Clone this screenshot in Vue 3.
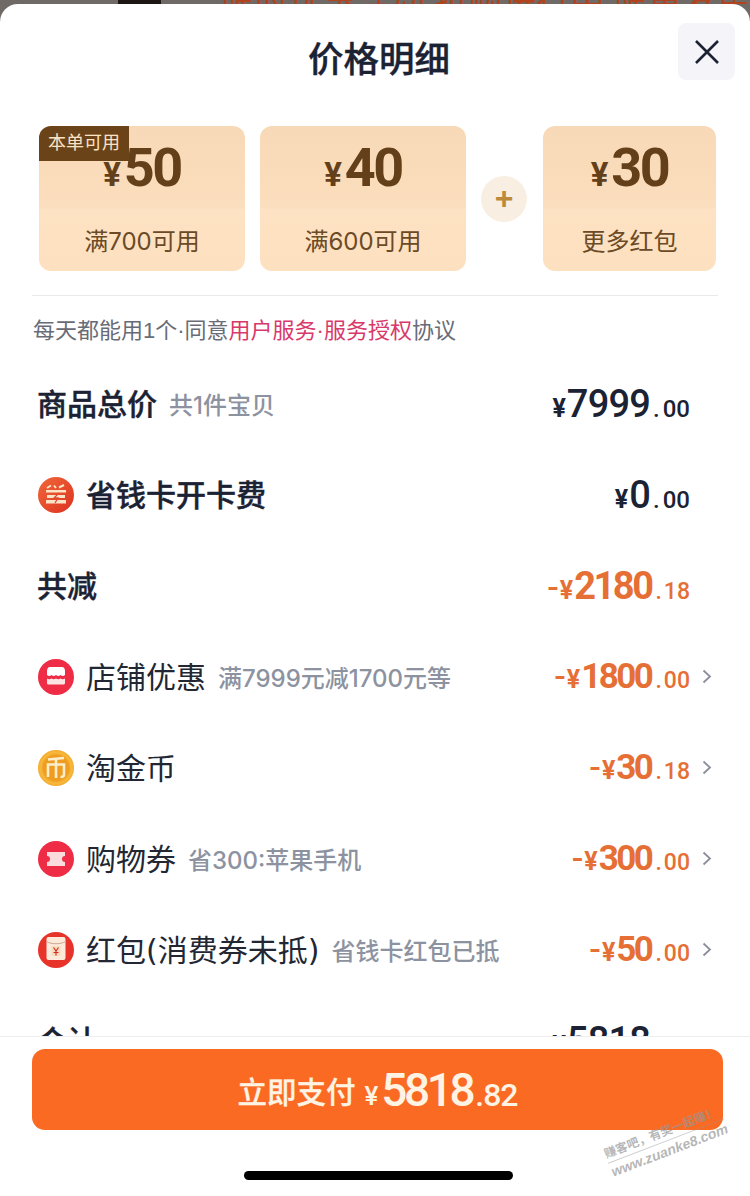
<template>
  <div class="page">
    <div class="backdrop">
      <span class="dark-block"></span>
      <span class="red-text">限时优惠活动 抢购进行中 限量发售</span>
    </div>
    <div class="sheet">
      <header class="head">
        <h1>价格明细</h1>
        <button class="close">
          <svg width="26" height="26" viewBox="0 0 26 26"><path d="M2 2 24 24M24 2 2 24" stroke="#1b2233" stroke-width="2.6" fill="none" /></svg>
        </button>
      </header>

      <div class="coupons">
        <div class="coupon wide">
          <span class="tag">本单可用</span>
          <div class="face"><small>¥</small>50</div>
          <div class="cond">满700可用</div>
        </div>
        <div class="coupon wide">
          <div class="face"><small>¥</small>40</div>
          <div class="cond">满600可用</div>
        </div>
        <div class="plus">+</div>
        <div class="coupon narrow">
          <div class="face"><small>¥</small>30</div>
          <div class="cond">更多红包</div>
        </div>
      </div>

      <p class="note">每天都能用1个·同意<em>用户服务·服务授权</em>协议</p>

      <div class="list">
        <div v-for="row in rows" :key="row.label" class="row" :class="{ arrowed: row.arrow }">
          <svg v-if="row.icon === 'card'" class="icon" viewBox="0 0 36 36">
            <defs><linearGradient id="cardg" x1="0" y1="0" x2="1" y2="1"><stop offset="0" stop-color="#f0683a" /><stop offset="1" stop-color="#dd3220" /></linearGradient></defs>
            <circle cx="18" cy="18" r="18" fill="url(#cardg)" />
            <path d="M9 11l4-2.500M16 8.500l2 2.500M21 10.500l5-2.500" stroke="#fbe3c8" stroke-width="2" fill="none" />
            <path d="M8 13h20v2.600H8zM9 18h18v3H9zM8 23h20v3.500H8z" fill="#fbe3c8" />
            <path d="M21 16l-5 5 4 0-3 5" stroke="#e5482c" stroke-width="1.300" fill="none" />
          </svg>
          <svg v-else-if="row.icon === 'shop'" class="icon" viewBox="0 0 36 36">
            <circle cx="18" cy="18" r="18" fill="#ee2c45" />
            <path d="M12 8h12c2 0 3 2 3 4v4c-1.500 1.200-3 1.200-4.500 0-1.500 1.200-3 1.200-4.500 0-1.500 1.200-3 1.200-4.500 0-1.500 1.200-3 1.200-4.500 0v-4c0-2 1-4 3-4z" fill="#fff" />
            <path d="M9 19.500c1.500 1 3 1 4.500 0 1.500 1 3 1 4.500 0 1.500 1 3 1 4.500 0 1.500 1 3 1 4.500 0V24c0 1-.8 1.500-2 1.500H11c-1.200 0-2-.5-2-1.500z" fill="#fde4e4" />
          </svg>
          <svg v-else-if="row.icon === 'coin'" class="icon" viewBox="0 0 36 36">
            <defs><radialGradient id="coing"><stop offset="0.7" stop-color="#ee9d20" /><stop offset="0.85" stop-color="#f8b93c" /><stop offset="1" stop-color="#f4ab2e" /></radialGradient></defs>
            <circle cx="18" cy="18" r="18" fill="url(#coing)" />
            <path d="M10 9.500l16-1.500M18 8.500v19.500M10 27V14.500h16v10c0 2-1 2.500-3.500 2.500" stroke="#fdeecb" stroke-width="2.600" fill="none" />
          </svg>
          <svg v-else-if="row.icon === 'ticket'" class="icon" viewBox="0 0 36 36">
            <circle cx="18" cy="18" r="18" fill="#ee2c45" />
            <path d="M9 11h18v4a3 3 0 0 0 0 6v4H9v-4a3 3 0 0 0 0-6z" fill="#fbdcdc" />
          </svg>
          <svg v-else-if="row.icon === 'packet'" class="icon" viewBox="0 0 36 36">
            <circle cx="18" cy="18" r="18" fill="#e8332a" />
            <rect x="8.500" y="5" width="19" height="23" rx="2" fill="#fdeadb" />
            <path d="M8.500 9.500c5 3 14 3 19 0" stroke="#c9a58c" stroke-width="1" fill="none" />
            <rect x="13.500" y="14" width="9" height="10" fill="#f8dcc0" />
            <path d="M15.500 15.500l2.500 3.500 2.500-3.500M18 19v4.500M15.500 20.500h5" stroke="#d62a1f" stroke-width="1.200" fill="none" />
          </svg>
          <span class="label" :class="row.kind">{{ row.label }}</span>
          <span v-if="row.sub" class="sub">{{ row.sub }}</span>
          <span class="price" :class="{ minus: row.minus, big: row.big }">
            <em v-if="row.minus">-</em><small>¥</small><b>{{ row.whole }}</b><i><u>.</u>{{ row.cents }}</i>
          </span>
          <svg v-if="row.arrow" class="chev" width="10" height="15" viewBox="0 0 10 15"><path d="M1.500 1.500 8 7.500l-6.500 6" stroke="#8a8f9b" stroke-width="1.800" fill="none" /></svg>
        </div>
      </div>

      <footer class="foot">
        <button class="pay"><span class="pay-label">立即支付</span><small>¥</small><b>5818</b><i>.82</i></button>
        <div class="home-bar"></div>
      </footer>
    </div>
    <div class="mark"><span class="mark-cn">赚客吧，有奖一起赚！</span><span class="mark-url">www.zuanke8.com</span></div>
  </div>
</template>

<script setup>
const rows = [
  { label: "商品总价", kind: "strong", sub: "共1件宝贝", whole: "7999", cents: "00" },
  { label: "省钱卡开卡费", kind: "strong", icon: "card", whole: "0", cents: "00" },
  { label: "共减", kind: "strong", whole: "2180", cents: "18", minus: true, big: true },
  { label: "店铺优惠", icon: "shop", sub: "满7999元减1700元等", whole: "1800", cents: "00", minus: true, arrow: true },
  { label: "淘金币", icon: "coin", whole: "30", cents: "18", minus: true, arrow: true },
  { label: "购物券", icon: "ticket", sub: "省300:苹果手机", whole: "300", cents: "00", minus: true, arrow: true },
  { label: "红包(消费券未抵)", icon: "packet", sub: "省钱卡红包已抵", whole: "50", cents: "00", minus: true, arrow: true },
  { label: "合计", kind: "strong", whole: "5818", cents: "82" },
];
</script>

<style>
body {
  margin: 0;
}
</style>

<style scoped>
.page {
  position: relative;
  width: 750px;
  height: 1196px;
  display: flex;
  flex-direction: column;
  overflow: hidden;
  background: #6f6a66;
  font-family: "Liberation Sans", "Noto Sans CJK SC", sans-serif;
}
.backdrop {
  height: 4px;
  display: flex;
  overflow: hidden;
  flex-shrink: 0;
}
.dark-block {
  width: 48px;
  margin-left: 118px;
  background: #1c1512;
}
.red-text {
  margin-left: 60px;
  color: #b2431f;
  font-size: 34px;
  line-height: 4px;
  white-space: nowrap;
}
.sheet {
  flex: 1;
  min-height: 0;
  display: flex;
  flex-direction: column;
  background: #fff;
  border-radius: 18px 18px 0 0;
}
.head {
  position: relative;
  height: 122px;
  flex-shrink: 0;
}
.head h1 {
  margin: 0;
  padding: 33px 0 0 8px;
  text-align: center;
  font-size: 35.5px;
  line-height: 46px;
  font-weight: 500;
  -webkit-text-stroke: 0.4px #1b2233;
  color: #1b2233;
}
.close {
  position: absolute;
  top: 19px;
  right: 15px;
  width: 57px;
  height: 57px;
  padding: 0;
  border: 0;
  border-radius: 8px;
  background: #f5f5f9;
  display: flex;
  align-items: center;
  justify-content: center;
}
.coupons {
  margin: 0 32px;
  padding: 0 7px 24px;
  height: 145px;
  display: flex;
  gap: 15px;
  align-items: center;
  border-bottom: 1px solid #e9e9ec;
  flex-shrink: 0;
}
.coupon {
  position: relative;
  height: 145px;
  border-radius: 12px;
  overflow: hidden;
  background: linear-gradient(#f8d9b7 0, #fbdebd 56%, #fde2c3 58%, #fde0bf 100%);
  color: #63401a;
  text-align: center;
  flex-shrink: 0;
}
.wide {
  width: 206px;
}
.narrow {
  width: 173px;
  margin-left: 1px;
}
.tag {
  position: absolute;
  left: 0;
  top: 0;
  width: 90px;
  height: 35px;
  background: #6a4319;
  color: #fde3c4;
  font-size: 18px;
  line-height: 35px;
}
.face {
  padding-top: 12px;
  font-family: Roboto, sans-serif;
  font-size: 54px;
  line-height: 60px;
  font-weight: 700;
  letter-spacing: -2.500px;
}
.face small {
  font-size: 33px;
  letter-spacing: 0;
  margin-right: 3px;
}
.cond {
  margin-top: 22px;
  font-family: Inter, "Noto Sans CJK SC", sans-serif;
  font-size: 24px;
  line-height: 30px;
  color: #6b4a26;
}
.plus {
  width: 46px;
  height: 46px;
  border-radius: 50%;
  background: #f9eee2;
  color: #bd8a3b;
  font-size: 32px;
  font-weight: 700;
  line-height: 44px;
  text-align: center;
  flex-shrink: 0;
}
.note {
  margin: 20px 0 0 33px;
  font-size: 22px;
  line-height: 30px;
  color: #686c77;
  flex-shrink: 0;
}
.note em {
  font-style: normal;
  color: #d8386a;
}
.list {
  flex: 1;
  min-height: 0;
  overflow: hidden;
  padding-top: 12px;
}
.row {
  height: 91px;
  padding: 0 60px 0 37px;
  display: flex;
  align-items: center;
  box-sizing: border-box;
}
.row.arrowed {
  padding-right: 38px;
}
.icon {
  width: 36px;
  height: 36px;
  margin: 0 12px 0 1px;
  flex-shrink: 0;
}
.label {
  margin-bottom: 3px;
  font-family: "DejaVu Sans", "Noto Sans CJK SC", sans-serif;
  font-size: 30px;
  color: #222733;
  white-space: nowrap;
}
.label.strong {
  font-weight: 500;
  -webkit-text-stroke: 0.4px #1b2233;
  color: #1b2233;
}
.sub {
  margin-left: 12px;
  font-family: Inter, "Noto Sans CJK SC", sans-serif;
  font-size: 24px;
  font-weight: 500;
  color: #8c92a0;
  white-space: nowrap;
}
.price {
  margin-left: auto;
  font-family: Roboto, sans-serif;
  font-weight: 700;
  color: #1b2233;
  white-space: nowrap;
}
.price b {
  font-size: 38px;
  font-weight: 500;
  letter-spacing: -0.800px;
}
.price small {
  font-size: 25px;
  font-weight: 700;
  margin-right: 1px;
}
.price em {
  font-style: normal;
  font-size: 34px;
  font-weight: 500;
  margin-right: 1px;
}
.price i {
  font-style: normal;
  font-size: 24px;
  font-weight: 500;
}
.price u {
  text-decoration: none;
  margin: 0 3px;
}
.price.minus {
  color: #e56f35;
}
.price.minus b {
  font-size: 35px;
  font-weight: 700;
  letter-spacing: -2.500px;
}
.price.minus.big b {
  font-size: 38px;
  letter-spacing: -2.500px;
}
.price.minus i {
  font-size: 23px;
}
.price.minus u {
  margin: 0 2px 0 4px;
}
.chev {
  margin-left: 12px;
  flex-shrink: 0;
}
.foot {
  height: 160px;
  position: relative;
  flex-shrink: 0;
  background: #fff;
  border-top: 1px solid #eeeeef;
  box-sizing: border-box;
  padding: 12px 27px 0 32px;
}
.pay {
  display: block;
  width: 100%;
  height: 81px;
  padding: 0;
  border: 0;
  border-radius: 13px;
  background: #fb6a22;
  color: #fff3e4;
  font-family: Roboto, "Noto Sans CJK SC", sans-serif;
  font-size: 29.500px;
  font-weight: 500;
  text-align: center;
  white-space: nowrap;
}
.pay-label {
  vertical-align: 3px;
  -webkit-text-stroke: 0.3px #fff3e4;
}
.pay small {
  font-size: 26px;
  margin: 0 3px 0 9px;
  vertical-align: 1px;
}
.pay b {
  font-size: 46px;
  font-weight: 500;
  letter-spacing: -3.400px;
}
.pay i {
  font-style: normal;
  font-size: 32px;
  letter-spacing: -1px;
  margin-left: 3px;
}
.home-bar {
  width: 269px;
  height: 9px;
  margin: 41px 0 0 212px;
  border-radius: 5px;
  background: #000;
}
.mark {
  position: absolute;
  left: 602px;
  top: 1147px;
  display: flex;
  flex-direction: column;
  color: rgba(150, 150, 150, 0.7);
  transform: rotate(-21deg);
  transform-origin: 0 0;
  white-space: nowrap;
  font-weight: 700;
}
.mark-cn {
  font-size: 12px;
  line-height: 17px;
  border-bottom: 1px solid rgba(150, 150, 150, 0.45);
}
.mark-url {
  font-size: 14px;
  line-height: 18px;
  font-style: italic;
}
</style>
